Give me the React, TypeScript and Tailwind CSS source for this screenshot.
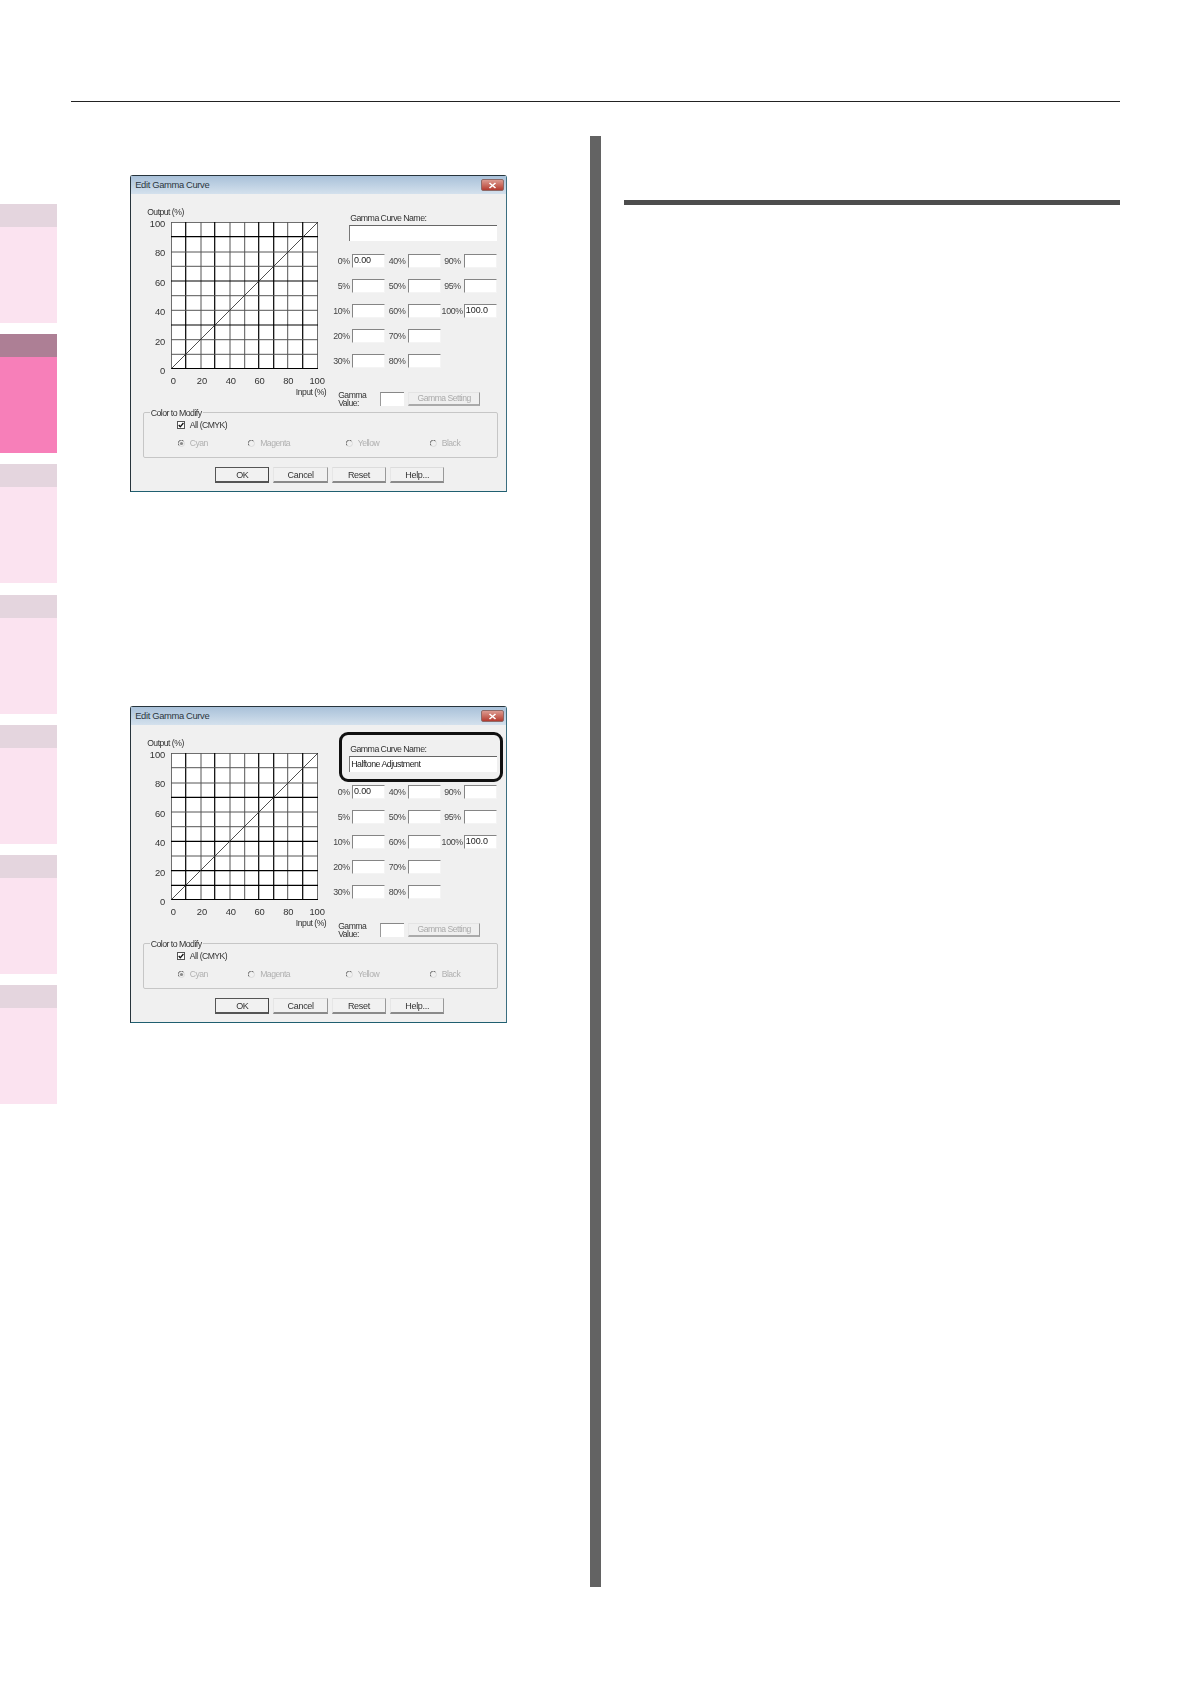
import React from "react";

const font = "font-['Liberation_Sans',Arial,sans-serif]";

const vLines: [number, boolean][] = [
  [14.7, true], [30, false], [43.7, true], [59, false], [73.7, false],
  [87.7, true], [102.7, true], [116.7, false], [131.7, true],
];
const hA: [number, boolean][] = [
  [14.7, true], [30, false], [44.3, false], [59, true], [73.7, false],
  [88.3, false], [103, true], [117.7, false], [132.3, false],
];
const hB: [number, boolean][] = [
  [14.7, false], [30, false], [44.3, true], [59, false], [73.7, false],
  [88.3, true], [103, false], [117.7, true], [132.3, true],
];

function Chart({ lines }: { lines: [number, boolean][] }) {
  return (
    <svg width="147" height="147" viewBox="0 0 147 147" className="block bg-white shrink-0">
      <rect x="0.4" y="0.4" width="146.2" height="146.2" fill="none" stroke="#555" strokeWidth="0.9" />
      {vLines.map(([p, dark]) => (
        <line key={p} x1={p} x2={p} y1="0" y2="147" stroke={dark ? "#000" : "#555"} strokeWidth={dark ? 1.2 : 1} />
      ))}
      {lines.map(([p, dark]) => (
        <line key={p} y1={p} y2={p} x1="0" x2="147" stroke={dark ? "#000" : "#555"} strokeWidth={dark ? 1.2 : 1} />
      ))}
      <line x1="0" x2="147" y1="146.6" y2="146.6" stroke="#000" strokeWidth="1.2" />
      <line x1="0" y1="147" x2="147" y2="0" stroke="#222" strokeWidth="0.8" />
    </svg>
  );
}

function Field({ value }: { value?: string }) {
  return (
    <div className="h-[13.3px] w-[33px] bg-white border-t border-l border-t-[#858585] border-l-[#858585] border-r border-b border-r-[#f4f4f4] border-b-[#f4f4f4] pl-[1px] text-[9px] tracking-[-0.1px] leading-[11px] text-[#222]">
      {value}
    </div>
  );
}

function Lab({ t, pr }: { t: string; pr: string }) {
  return <div className={`flex justify-end items-center whitespace-nowrap text-[#444] text-[8.8px] tracking-[-0.3px] ${pr}`}>{t}</div>;
}

function Radio({ on, label, w }: { on?: boolean; label: string; w: string }) {
  return (
    <div className={`flex items-center gap-[5px] ${w}`}>
      <svg width="7" height="7" viewBox="0 0 7 7" className="shrink-0">
        <circle cx="3.5" cy="3.5" r="3" fill="#f0f0f0" stroke="#d5d5d5" strokeWidth="0.8" />
        <path d="M1 5.5 A3 3 0 0 1 5.5 1" fill="none" stroke="#666" strokeWidth="0.9" />
        {on && <circle cx="3.5" cy="3.5" r="1.6" fill="#8a8a8a" />}
      </svg>
      <span className="text-[#b0b0b0]">{label}</span>
    </div>
  );
}

function Btn({ t, primary }: { t: string; primary?: boolean }) {
  return (
    <div
      className={`h-[16px] w-[54.3px] flex items-center justify-center bg-[#f1f1f1] text-[#333] text-[9px] tracking-[-0.3px] ${
        primary
          ? "border border-[#555] border-r-[#444] border-b-2 border-b-[#555]"
          : "border-t border-l border-t-[#dcdcdc] border-l-[#e6e6e6] border-r border-r-[#999] border-b-2 border-b-[#8a8a8a]"
      }`}
    >
      {t}
    </div>
  );
}

function Dialog({ name, lines, highlight }: { name?: string; lines: [number, boolean][]; highlight?: boolean }) {
  return (
    <div className={`relative w-[377px] h-[317px] bg-[#f0f0f0] border border-[#27343c] border-b-[#1f5f70] border-r-[#3b6e80] rounded-t-[3px] blur-[0.35px] text-[8.6px] leading-[10px] tracking-[-0.5px] ${font}`}>
      <div className="h-[18px] flex items-center justify-between pl-[4px] pr-[2px] bg-gradient-to-b from-[#a9c1d9] to-[#d4e1ed]">
        <span className="text-[9.4px] tracking-[-0.35px] text-[#2b3640]">Edit Gamma Curve</span>
        <div className="w-[23px] h-[12px] rounded-[2px] flex items-center justify-center bg-gradient-to-b from-[#dc9a90] to-[#b33a30] border border-[#8f6a68]">
          <svg width="9" height="7" viewBox="0 0 9 7">
            <path d="M1.5 1 L7.5 6 M7.5 1 L1.5 6" stroke="#fff" strokeWidth="1.6" />
          </svg>
        </div>
      </div>

      <div className="flex h-[217px]">
        <div className="w-[204px] shrink-0">
          <div className="pl-[16px] pt-[13px] h-[28px] text-[#333]">Output (%)</div>
          <div className="flex items-start">
            <div className="w-[34px] h-[157px] -mt-[3.5px] flex flex-col justify-between items-end text-[9.4px] tracking-[-0.1px] text-[#333]">
              {["100", "80", "60", "40", "20", "0"].map((n) => (
                <span key={n}>{n}</span>
              ))}
            </div>
            <div className="ml-[6px]">
              <Chart lines={lines} />
            </div>
          </div>
          <div className="ml-[36px] w-[156px] mt-[-1px] h-[12px] flex justify-between text-[9.4px] tracking-[-0.1px] text-[#333] translate-y-[1px]">
            {["0", "20", "40", "60", "80", "100"].map((n) => (
              <span key={n} className="w-[12px] flex justify-center">{n}</span>
            ))}
          </div>
          <div className="w-[195px] text-right text-[#333]">Input (%)</div>
        </div>

        <div className="flex-1 min-w-0">
          <div className="pl-[15px] pt-[19px] h-[31px] text-[#333] text-[8.8px] tracking-[-0.55px]">Gamma Curve Name:</div>
          <div className="ml-[14px] w-[148px] h-[16px] bg-white border-t border-l border-t-[#666] border-l-[#777] pl-[1px] text-[8.8px] tracking-[-0.5px] leading-[14px] text-[#222]">
            {name}
          </div>
          <div className="mt-[13px] grid grid-cols-[16.7px_33px_23.6px_33px_22.4px_33px] auto-rows-[13.3px] gap-y-[11.7px]">
            <Lab t="0%" pr="pr-[2px]" /><Field value="0.00" /><Lab t="40%" pr="pr-[3px]" /><Field /><Lab t="90%" pr="pr-[3px]" /><Field />
            <Lab t="5%" pr="pr-[2px]" /><Field /><Lab t="50%" pr="pr-[3px]" /><Field /><Lab t="95%" pr="pr-[3px]" /><Field />
            <Lab t="10%" pr="pr-[2px]" /><Field /><Lab t="60%" pr="pr-[3px]" /><Field /><Lab t="100%" pr="pr-[1px]" /><Field value="100.0" />
            <Lab t="20%" pr="pr-[2px]" /><Field /><Lab t="70%" pr="pr-[3px]" /><Field /><div /><div />
            <Lab t="30%" pr="pr-[2px]" /><Field /><Lab t="80%" pr="pr-[3px]" /><Field /><div /><div />
          </div>
          <div className="mt-[24px] flex items-start">
            <div className="ml-[3px] w-[42px] leading-[8.5px] -mt-[1px] text-[#333]">
              Gamma<br />Value:
            </div>
            <div className="w-[24px] h-[14px] bg-white border-t border-l border-t-[#888] border-l-[#999]" />
            <div className="ml-[4px] w-[72px] h-[14px] flex items-center justify-center bg-[#efefef] border-t border-l border-t-[#e4e4e4] border-l-[#e8e8e8] border-r border-r-[#999] border-b-2 border-b-[#aaa] text-[#aaa]">
              Gamma Setting
            </div>
          </div>
        </div>
      </div>

      <div className="relative ml-[11.5px] w-[355.5px] h-[46px] mt-[1px] border border-[#c6c6c6] rounded-[2px]">
        <span className="absolute -top-[5px] left-[6px] bg-[#f0f0f0] px-[1px] text-[#333] text-[8.8px] tracking-[-0.55px]">Color to Modify</span>
        <div className="flex items-center pl-[33px] pt-[7px] gap-[5px] text-[#333]">
          <svg width="8" height="8" viewBox="0 0 8 8" className="shrink-0">
            <rect x="0.5" y="0.5" width="7" height="7" fill="#fff" stroke="#555" />
            <path d="M1.7 4 L3.3 5.8 L6.4 2" fill="none" stroke="#111" strokeWidth="1.3" />
          </svg>
          <span>All (CMYK)</span>
        </div>
        <div className="flex items-center pl-[34px] mt-[8px]">
          <Radio on label="Cyan" w="w-[70.5px]" />
          <Radio label="Magenta" w="w-[97.5px]" />
          <Radio label="Yellow" w="w-[84px]" />
          <Radio label="Black" w="w-[60px]" />
        </div>
      </div>

      <div className="flex gap-[4px] ml-[84px] mt-[9px]">
        <Btn t="OK" primary />
        <Btn t="Cancel" />
        <Btn t="Reset" />
        <Btn t="Help..." />
      </div>

      {highlight && (
        <div className="absolute left-[208px] top-[25px] w-[164px] h-[50px] border-[3px] border-[#111] rounded-[9px]" />
      )}
    </div>
  );
}

function Tab({ active }: { active?: boolean }) {
  return (
    <div className={`h-[119px] ${active ? "bg-[#f77fb9]" : "bg-[#fbe3f0]"}`}>
      <div className={`h-[23px] ${active ? "bg-[#ad7f95]" : "bg-[#e4d5de]"}`} />
    </div>
  );
}

export default function App() {
  return (
    <div className="w-[1191px] h-[1684px] bg-white overflow-hidden">
      <div className="ml-[71px] mt-0 pt-[101px]">
        <div className="w-[1049px] h-[1.4px] bg-[#222]" />
      </div>
      <div className="flex mt-[33.6px]">
        <div className="w-[57px] shrink-0 mt-[68px] flex flex-col gap-[11.2px]">
          <Tab />
          <Tab active />
          <Tab />
          <Tab />
          <Tab />
          <Tab />
          <Tab />
        </div>
        <div className="ml-[73.2px] w-[377px] shrink-0 mt-[39.5px] flex flex-col gap-[214px]">
          <Dialog lines={hA} />
          <Dialog lines={hB} name="Halftone Adjustment" highlight />
        </div>
        <div className="ml-[82.8px] w-[10.7px] h-[1451px] bg-[#636363] shrink-0" />
        <div className="ml-[23.3px] w-[496px] pt-[64px]">
          <div className="h-[5.3px] bg-[#4d4d4d]" />
        </div>
      </div>
    </div>
  );
}
